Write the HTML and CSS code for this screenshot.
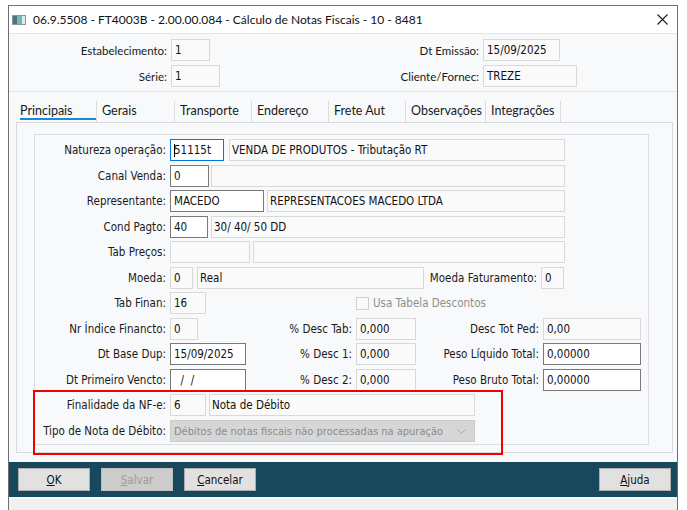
FILE: index.html
```html
<!DOCTYPE html>
<html lang="pt-BR">
<head>
<meta charset="utf-8">
<title>Cálculo de Notas Fiscais</title>
<link rel="stylesheet" href="styles.css">
</head>
<body>
<div class="win">
  <div class="titlebar">
    <svg class="appicon" width="14" height="10" viewBox="0 0 14 10">
      <rect x="0.5" y="0.5" width="13" height="9" fill="#e9eef2" stroke="#8a969e"/>
      <rect x="1" y="1" width="4" height="8" fill="#56707f"/>
      <rect x="5" y="1" width="5" height="8" fill="#6cbcaa"/>
      <rect x="10" y="1" width="3" height="8" fill="#dfe9ee"/>
    </svg>
    <span class="title">06.9.5508 - FT4003B - 2.00.00.084 - Cálculo de Notas Fiscais - 10 - 8481</span>
    <svg class="close" width="11" height="11" viewBox="0 0 11 11">
      <path d="M0.5 0.5 L10.5 10.5 M10.5 0.5 L0.5 10.5" stroke="#1b1b1b" stroke-width="1.1" fill="none"/>
    </svg>
  </div>

  <div class="head">
    <div class="hrow">
      <div class="hleft"><span class="hlabel">Estabelecimento:</span><span class="f w39">1</span></div>
      <div class="hright"><span class="hlabel hl2">Dt Emissão:</span><span class="f w77">15/09/2025</span></div>
    </div>
    <div class="hrow">
      <div class="hleft"><span class="hlabel">Série:</span><span class="f w49">1</span></div>
      <div class="hright"><span class="hlabel hl2">Cliente/Fornec:</span><span class="f w94">TREZE</span></div>
    </div>
  </div>

  <div class="tabs">
    <div class="tab first"><span class="active">Principais</span></div>
    <div class="tab t78">Gerais</div>
    <div class="tab t77">Transporte</div>
    <div class="tab t77">Endereço</div>
    <div class="tab t77">Frete Aut</div>
    <div class="tab t80">Observações</div>
    <div class="tab t76 last">Integrações</div>
  </div>

  <div class="panel">
    <div class="group">
      <div class="form">
        <div class="row">
          <span class="lbl">Natureza operação:</span>
          <span class="f focus w54"><i class="caret"></i>51115t</span>
          <span class="f desc w336 g5">VENDA DE PRODUTOS - Tributação RT</span>
        </div>
        <div class="row">
          <span class="lbl">Canal Venda:</span>
          <span class="f ed w39">0</span>
          <span class="f desc w354 g2"></span>
        </div>
        <div class="row">
          <span class="lbl">Representante:</span>
          <span class="f ed w94">MACEDO</span>
          <span class="f desc w298 g3">REPRESENTACOES MACEDO LTDA</span>
        </div>
        <div class="row">
          <span class="lbl">Cond Pagto:</span>
          <span class="f ed w38">40</span>
          <span class="f desc w354 g3">30/ 40/ 50 DD</span>
        </div>
        <div class="row">
          <span class="lbl">Tab Preços:</span>
          <span class="f w80"></span>
          <span class="f desc w312 g3"></span>
        </div>
        <div class="row">
          <span class="lbl">Moeda:</span>
          <span class="f w23">0</span>
          <span class="f desc w227 g4">Real</span>
          <span class="lbl lmf">Moeda Faturamento:</span>
          <span class="f w23">0</span>
        </div>
        <div class="row">
          <div class="col1"><span class="lbl">Tab Finan:</span><span class="f w36">16</span></div>
          <label class="check"><span class="box"></span><span class="check-text">Usa Tabela Descontos</span></label>
        </div>
        <div class="row">
          <div class="col1"><span class="lbl">Nr Índice Financto:</span><span class="f w28">0</span></div>
          <div class="col2"><span class="lbl l2">% Desc Tab:</span><span class="f w60">0,000</span></div>
          <div class="col3"><span class="lbl l3">Desc Tot Ped:</span><span class="f w98">0,00</span></div>
        </div>
        <div class="row">
          <div class="col1"><span class="lbl">Dt Base Dup:</span><span class="f ed w76">15/09/2025</span></div>
          <div class="col2"><span class="lbl l2">% Desc 1:</span><span class="f w60">0,000</span></div>
          <div class="col3"><span class="lbl l3">Peso Líquido Total:</span><span class="f ed w98">0,00000</span></div>
        </div>
        <div class="row">
          <div class="col1"><span class="lbl">Dt Primeiro Vencto:</span><span class="f ed w76">  /  /</span></div>
          <div class="col2"><span class="lbl l2">% Desc 2:</span><span class="f w60">0,000</span></div>
          <div class="col3"><span class="lbl l3">Peso Bruto Total:</span><span class="f ed w98">0,00000</span></div>
        </div>
        <div class="row">
          <span class="lbl">Finalidade da NF-e:</span>
          <span class="f w36">6</span>
          <span class="f desc w266 g3">Nota de Débito</span>
        </div>
        <div class="row">
          <span class="lbl">Tipo de Nota de Débito:</span>
          <span class="f combo w305"><span class="combo-text">Débitos de notas fiscais não processadas na apuração</span><svg class="chev" width="9" height="5" viewBox="0 0 9 5"><path d="M0.5 0.5 L4.5 4.5 L8.5 0.5" stroke="#a6a6a6" fill="none" stroke-width="1"/></svg></span>
        </div>
      </div>
    </div>
  </div>

  <div class="footer">
    <button class="btn"><u>O</u>K</button>
    <button class="btn disabled"><u>S</u>alvar</button>
    <button class="btn"><u>C</u>ancelar</button>
    <button class="btn help"><u>A</u>juda</button>
  </div>
  <div class="status"></div>

  <div class="annot"></div>
</div>
</body>
</html>
```

FILE: styles.css
```css
* { box-sizing: border-box; }

body {
  margin: 0;
  background: #ffffff;
  font-family: "DejaVu Sans Condensed", "Liberation Sans", sans-serif;
  font-size: 11.5px;
  color: #1a1a1a;
}

.win {
  position: relative;
  margin: 5px 0 0 8px;
  width: 670px;
  height: 520px;
  border: 1px solid #6f6f6f;
  border-bottom: none;
  background: #f8f9fa;
}

/* title bar */
.titlebar {
  height: 28px;
  background: #ffffff;
  border-bottom: 1px solid #e4e4e4;
  display: flex;
  align-items: center;
  padding-left: 3px;
}
.appicon { flex: none; margin-top: 1px; }
.title {
  margin-left: 7px;
  font-family: Lato, "Liberation Sans", sans-serif;
  font-size: 12px;
  color: #111;
}
.close { margin-left: auto; margin-right: 9px; }

/* header fields */
.head {
  padding: 5px 0 4px;
  border-bottom: 1px solid #e1e2e4;
  display: flex;
  flex-direction: column;
  gap: 4px;
}
.hrow { display: flex; align-items: center; height: 22px; }
.hleft { width: 291px; display: flex; align-items: center; }
.hright { display: flex; align-items: center; }
.hlabel {
  width: 158px;
  margin-right: 4px;
  text-align: right;
  font-family: Lato, "Liberation Sans", sans-serif;
  font-size: 11.5px;
  white-space: nowrap;
}
.hl2 { width: 179px; }

/* tabs */
.tabs {
  height: 30px;
  display: flex;
  align-items: flex-end;
  padding-left: 11px;
  font-family: Lato, "Liberation Sans", sans-serif;
  font-size: 12.5px;
}
.tab {
  height: 21px;
  padding: 3px 0 0 5px;
  line-height: 14px;
  border-left: 1px solid #dcdcdc;
  white-space: nowrap;
}
.tab.first { width: 76px; padding-left: 0; border-left: none; }
.tab.last { border-right: 1px solid #dcdcdc; }
.tab .active {
  display: block;
  width: 76px;
  border-bottom: 2px solid #1a8ad4;
  padding-bottom: 0;
}
.t76 { width: 76px; }
.t77 { width: 77px; }
.t78 { width: 78px; }
.t80 { width: 80px; }

/* panel */
.panel {
  margin: 0 4px 0 7px;
  height: 331px;
  border: 1px solid #d9dadd;
  padding: 11px 23px 0 17px;
}
.group {
  height: 311px;
  border: 1px solid #dcdde0;
  padding-top: 4px;
}
.form { display: flex; flex-direction: column; gap: 3.55px; }
.row { display: flex; align-items: center; height: 22px; }
.lbl {
  flex: none;
  width: 131px;
  margin-right: 4px;
  text-align: right;
  white-space: nowrap;
}
.lmf { width: 113px; }
.col1 { width: 235px; display: flex; align-items: center; flex: none; }
.col2, .col3 { display: flex; align-items: center; flex: none; }
.l2 { width: 82px; }
.l3 { width: 123px; }

/* fields */
.f {
  flex: none;
  height: 22px;
  border: 1px solid #d9d9d9;
  background: #fafafa;
  padding: 0 3px;
  display: flex;
  align-items: center;
  white-space: pre;
  overflow: hidden;
  color: #111;
}
.f.desc { padding-left: 2px; }
.f.ed { border-color: #7a7a7a; background: #ffffff; }
.f.focus { border-color: #0078d7; background: #ffffff; }
.caret {
  display: inline-block;
  width: 1px;
  height: 13px;
  background: #000;
  margin-right: -1px;
}
.f.combo {
  background: #d6d6d6;
  border-color: #cbcbcb;
  color: #8c8c8c;
  padding-left: 3px;
}
.combo-text { white-space: nowrap; font-size: 11px; }
.chev { margin-left: auto; margin-right: 5px; flex: none; }

.g2 { margin-left: 2px; }
.g3 { margin-left: 3px; }
.g4 { margin-left: 4px; }
.g5 { margin-left: 5px; }

.w23 { width: 23px; }
.w28 { width: 28px; }
.w36 { width: 36px; }
.w38 { width: 38px; }
.w39 { width: 39px; }
.w49 { width: 49px; }
.w54 { width: 54px; }
.w60 { width: 60px; }
.w76 { width: 76px; }
.w77 { width: 77px; }
.w80 { width: 80px; }
.w94 { width: 94px; }
.w98 { width: 98px; }
.w227 { width: 227px; }
.w266 { width: 266px; }
.w298 { width: 298px; }
.w305 { width: 305px; }
.w312 { width: 312px; }
.w336 { width: 336px; }
.w354 { width: 354px; }

/* checkbox */
.check { display: flex; align-items: center; margin-left: 86px; }
.check .box {
  width: 13px;
  height: 13px;
  border: 1px solid #d0d0d0;
  background: #fafafa;
}
.check-text { margin-left: 4px; color: #8e8e8e; }

/* footer */
.footer {
  margin-top: 9px;
  height: 35px;
  background: #18485b;
  display: flex;
  align-items: flex-start;
  gap: 11px;
  padding: 6px 6px 0 9px;
}
.btn {
  width: 72px;
  height: 23px;
  border: 1px solid #adadad;
  background: #e1e1e1;
  font-family: "DejaVu Sans Condensed", "Liberation Sans", sans-serif;
  font-size: 11.5px;
  color: #111;
  padding: 0;
}
.btn.disabled { background: #cccccc; border-color: #bfbfbf; color: #9b9b9b; }
.btn.help { margin-left: auto; }

.status {
  height: 20px;
  background: #f0f0f0;
  border-top: 2px solid #f8f8f8;
}

/* red annotation box drawn over the form */
.annot {
  position: absolute;
  left: 24px;
  top: 384px;
  width: 470px;
  height: 65px;
  border: 2px solid #f00000;
}
```
